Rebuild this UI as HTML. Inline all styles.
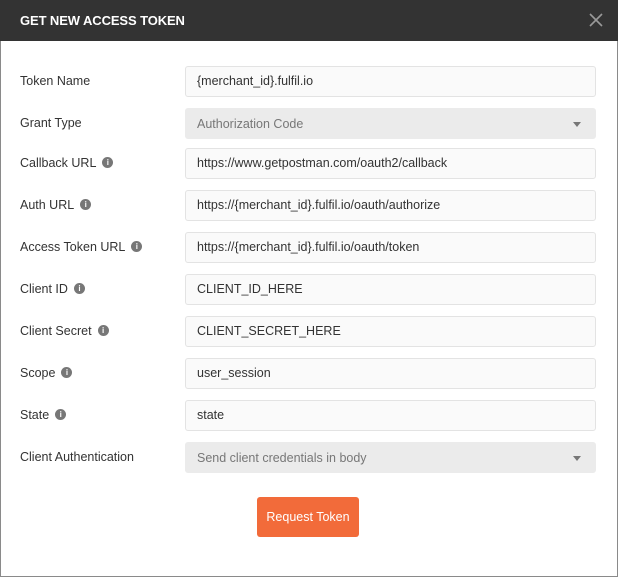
<!DOCTYPE html>
<html><head><style>
body{margin:0;width:618px;height:578px;background:#fff;font-family:"Liberation Sans",sans-serif;position:relative;overflow:hidden}
.frame{position:absolute;left:0;top:0;width:616px;height:576px;border:1px solid #8a8a8a;border-top:none}
.hdr{position:absolute;left:0;top:0;width:618px;height:41px;background:#333}
.hdr .t{position:absolute;left:20px;top:13px;color:#fff;font-size:13px;font-weight:bold;letter-spacing:-0.1px}
.x{position:absolute;left:588px;top:12px}
.lab{position:absolute;left:20px;font-size:12.5px;color:#333;height:31px;line-height:31px}
.i{display:inline-block;width:11px;height:11px;border-radius:50%;background:#777;color:#fff;font-size:8px;line-height:11px;text-align:center;font-weight:bold;vertical-align:middle;margin-left:6px;position:relative;top:-1px}
.in{position:absolute;left:185px;height:29px;border:1px solid #e3e3e3;border-radius:3px;background:#fafafa;font-size:12.5px;color:#333;line-height:29px;padding-left:11px;width:398px}
.sel{background:#ebebeb;border-color:#ebebeb;color:#777;line-height:30px}
.sel:after{content:"";position:absolute;right:14px;top:13px;border:4px solid transparent;border-top:5px solid #777;border-bottom:none}
.btn{position:absolute;left:257px;top:497px;width:102px;height:40px;background:#f26b3a;border-radius:3px;color:#fff;font-size:12.5px;line-height:40px;text-align:center}
</style></head><body>
<div class="frame"></div>
<div class="hdr"><div class="t">GET NEW ACCESS TOKEN</div>
<svg class="x" width="16" height="16" viewBox="0 0 16 16"><path d="M2 2L14 14M14 2L2 14" stroke="#999" stroke-width="1.6"/></svg></div>

<div class="lab" style="top:66px">Token Name</div><div class="in" style="top:66px">{merchant_id}.fulfil.io</div>
<div class="lab" style="top:108px">Grant Type</div><div class="in sel" style="top:108px">Authorization Code</div>
<div class="lab" style="top:148px">Callback URL<span class="i">i</span></div><div class="in" style="top:148px">https://www.getpostman.com/oauth2/callback</div>
<div class="lab" style="top:190px">Auth URL<span class="i">i</span></div><div class="in" style="top:190px">https://{merchant_id}.fulfil.io/oauth/authorize</div>
<div class="lab" style="top:232px">Access Token URL<span class="i">i</span></div><div class="in" style="top:232px">https://{merchant_id}.fulfil.io/oauth/token</div>
<div class="lab" style="top:274px">Client ID<span class="i">i</span></div><div class="in" style="top:274px">CLIENT_ID_HERE</div>
<div class="lab" style="top:316px">Client Secret<span class="i">i</span></div><div class="in" style="top:316px">CLIENT_SECRET_HERE</div>
<div class="lab" style="top:358px">Scope<span class="i">i</span></div><div class="in" style="top:358px">user_session</div>
<div class="lab" style="top:400px">State<span class="i">i</span></div><div class="in" style="top:400px">state</div>
<div class="lab" style="top:442px">Client Authentication</div><div class="in sel" style="top:442px">Send client credentials in body</div>
<div class="btn">Request Token</div>
</body></html>
